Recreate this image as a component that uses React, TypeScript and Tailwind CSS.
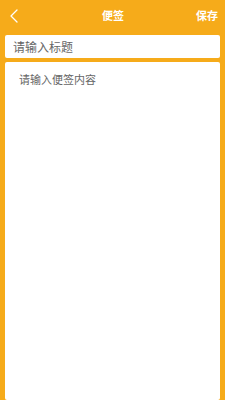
export default function App() {
  return (
    <div
      className="flex h-[400px] w-[225px] flex-col overflow-hidden bg-[#f6ab1a]"
      style={{ fontFamily: '"Noto Sans CJK SC", "Noto Sans", sans-serif' }}
    >
      <header className="flex h-[30px] shrink-0 items-center justify-between pl-[9px] pr-[7px]">
        <svg width="9" height="14" viewBox="0 0 9 14" fill="none" className="mt-[2px]">
          <path d="M8 1 L2 7 L8 13" stroke="white" strokeWidth="1.3" strokeLinecap="round" strokeLinejoin="round" />
        </svg>
        <h1 className="pl-[12px] text-[11px] font-bold text-white">便签</h1>
        <button className="text-[11px] font-bold text-white">保存</button>
      </header>

      <div className="flex flex-1 flex-col gap-[4px] px-[5px] pt-[5px]">
        <input
          className="h-[23px] w-full rounded-[2px] bg-white px-[8px] text-[12px] text-[#555] outline-none placeholder:text-[#666]"
          placeholder="请输入标题"
        />
        <textarea
          className="flex-1 resize-none rounded-[2px] bg-white px-[14px] pt-[9px] text-[11px] text-[#555] outline-none placeholder:text-[#666]"
          placeholder="请输入便签内容"
        />
      </div>
    </div>
  );
}
